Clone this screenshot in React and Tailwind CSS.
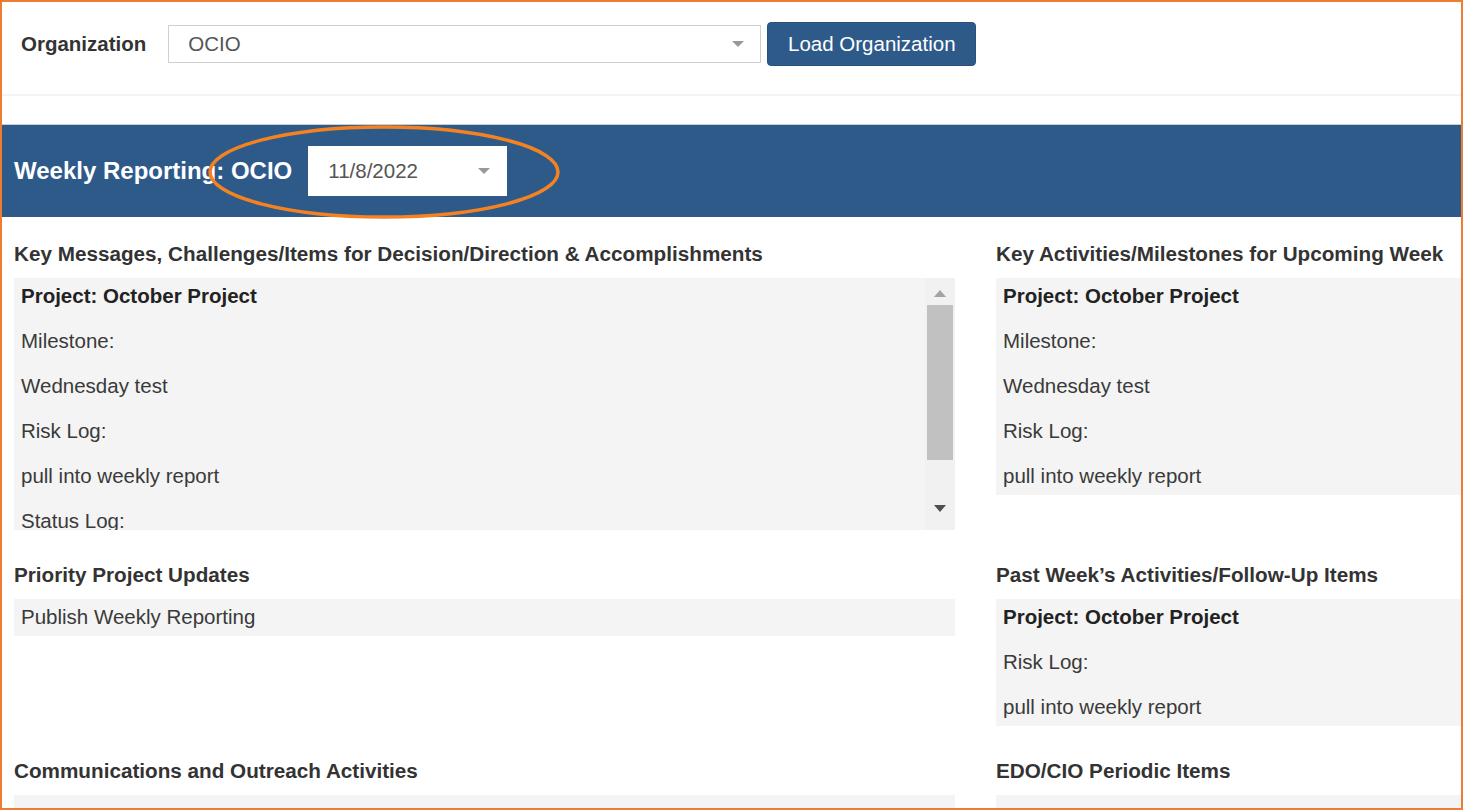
import React from 'react';

const font = { fontFamily: '"Liberation Sans", Arial, sans-serif' };

function Caret({ className }) {
  return (
    <svg className={className} width="12" height="6" viewBox="0 0 12 6">
      <path d="M0 0 L12 0 L6 6 Z" fill="#999" />
    </svg>
  );
}

function Heading({ children }) {
  return <h3 className="text-[20.7px] leading-[29px] font-bold text-[#333] mb-[10px] whitespace-nowrap">{children}</h3>;
}

function Lines({ items }) {
  return (
    <div className="flex flex-col gap-4 pl-[7px] pt-[3px] pb-[5px]">
      {items.map((it, i) => (
        <p key={i} className={`text-[20.5px] leading-[29px] whitespace-nowrap ${it.bold ? 'font-bold text-[#222]' : 'text-[#3a3a3a]'}`}>
          {it.text}
        </p>
      ))}
    </div>
  );
}

const projectFull = [
  { text: 'Project: October Project', bold: true },
  { text: 'Milestone:' },
  { text: 'Wednesday test' },
  { text: 'Risk Log:' },
  { text: 'pull into weekly report' },
  { text: 'Status Log:' },
];

const projectUpcoming = [
  { text: 'Project: October Project', bold: true },
  { text: 'Milestone:' },
  { text: 'Wednesday test' },
  { text: 'Risk Log:' },
  { text: 'pull into weekly report' },
];

const projectPast = [
  { text: 'Project: October Project', bold: true },
  { text: 'Risk Log:' },
  { text: 'pull into weekly report' },
];

export default function App() {
  return (
    <div style={font} className="relative w-full h-[810px] overflow-hidden bg-white border-2 border-[#ED7D31]">
      {/* organization picker */}
      <div className="pt-[20px] pl-[19px] h-[94px] flex items-start border-b-2 border-[#f3f3f3]">
        <div className="flex items-center h-[44px]">
          <span className="text-[20.5px] font-bold text-[#333]">Organization</span>
          <div className="ml-[22px] w-[593px] h-[38px] border border-[#cfcfcf] bg-white flex items-center justify-between pl-[19px] pr-[16px]">
            <span className="text-[20.5px] text-[#555]">OCIO</span>
            <Caret />
          </div>
          <button className="ml-[6px] w-[209px] h-[44px] rounded-[4px] bg-[#2E5A8A] border border-[#29517d] text-white text-[20.5px]">
            Load Organization
          </button>
        </div>
      </div>

      {/* weekly reporting band */}
      <div className="mt-[28px] h-[93px] bg-[#2E5A8A] border-t border-[#c5cfd9] flex items-center pl-[12px]">
        <span className="text-[24px] font-bold text-white">Weekly Reporting: OCIO</span>
        <div className="ml-[16px] w-[199px] h-[50px] bg-white flex items-center justify-between pl-[20px] pr-[17px]">
          <span className="text-[20.5px] text-[#555]">11/8/2022</span>
          <Caret />
        </div>
      </div>

      {/* sections */}
      <div className="pl-[12px] pt-[22px] grid grid-cols-[941px_1fr] gap-x-[41px] gap-y-[30px]">
        <div>
          <Heading>Key Messages, Challenges/Items for Decision/Direction &amp; Accomplishments</Heading>
          <div className="h-[252px] bg-[#f4f4f4] flex overflow-hidden">
            <div className="flex-1 overflow-hidden">
              <Lines items={projectFull} />
            </div>
            <div className="w-[30px] bg-[#f1f1f1] flex flex-col items-center">
              <svg className="mt-[12px]" width="12" height="7" viewBox="0 0 12 7">
                <path d="M0 7 L12 7 L6 0 Z" fill="#a3a3a3" />
              </svg>
              <div className="mt-[8px] w-[26px] h-[155px] bg-[#c1c1c1]" />
              <svg className="mt-[45px]" width="12" height="7" viewBox="0 0 12 7">
                <path d="M0 0 L12 0 L6 7 Z" fill="#505050" />
              </svg>
            </div>
          </div>
        </div>
        <div>
          <Heading>Key Activities/Milestones for Upcoming Week</Heading>
          <div className="bg-[#f4f4f4]">
            <Lines items={projectUpcoming} />
          </div>
        </div>

        <div>
          <Heading>Priority Project Updates</Heading>
          <div className="bg-[#f4f4f4]">
            <Lines items={[{ text: 'Publish Weekly Reporting' }]} />
          </div>
        </div>
        <div>
          <Heading>Past Week’s Activities/Follow-Up Items</Heading>
          <div className="bg-[#f4f4f4]">
            <Lines items={projectPast} />
          </div>
        </div>

        <div>
          <Heading>Communications and Outreach Activities</Heading>
          <div className="h-[80px] bg-[#f4f4f4]" />
        </div>
        <div>
          <Heading>EDO/CIO Periodic Items</Heading>
          <div className="h-[80px] bg-[#f4f4f4]" />
        </div>
      </div>

      {/* annotation ellipse */}
      <svg className="absolute left-[204px] top-[122px] pointer-events-none" width="358" height="100" viewBox="0 0 358 100">
        <ellipse cx="178" cy="48" rx="174" ry="45" fill="none" stroke="#F58220" strokeWidth="3.5" />
      </svg>
    </div>
  );
}
